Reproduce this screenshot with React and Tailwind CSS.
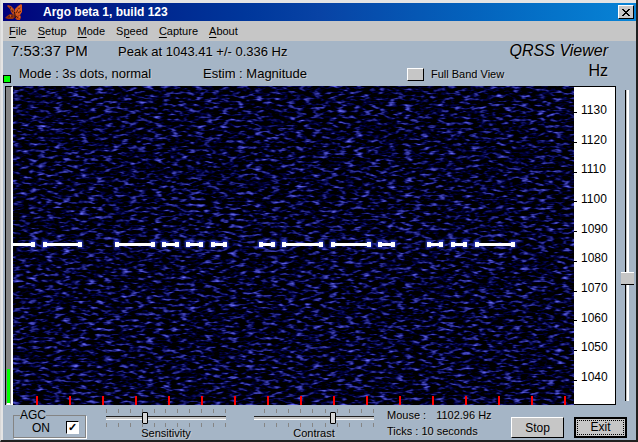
import { useState } from "react";

const MENUS = [
  { before: "", key: "F", after: "ile" },
  { before: "", key: "S", after: "etup" },
  { before: "", key: "M", after: "ode" },
  { before: "S", key: "p", after: "eed" },
  { before: "", key: "C", after: "apture" },
  { before: "", key: "A", after: "bout" },
];

const FREQUENCIES = [1130, 1120, 1110, 1100, 1090, 1080, 1070, 1060, 1050, 1040];

// start and end of every keyed element on the trace
const MORSE = [
  [-4, 21],
  [32, 68],
  [104, 141],
  [151, 165],
  [175, 189],
  [200, 213],
  [248, 261],
  [271, 309],
  [320, 357],
  [367, 381],
  [416, 429],
  [440, 453],
  [464, 501],
];

const TIME_TICKS = Array.from({ length: 17 }, (_, i) => 23 + i * 33);

const Butterfly = () => (
  <svg width="18" height="18" viewBox="0 0 18 18" aria-hidden="true">
    <path d="M8 12 6 9 5 6 2 3 3 2 6 3 9 6 10 11Z" fill="#b8481c" />
    <path d="M9 12 10 6 13 3 16 1 17 2 17 9 15 12 11 14Z" fill="#d8581c" />
    <path d="M9 12 5 11 2 13 0 15 3 16 8 16 10 14Z" fill="#94300e" />
    <path d="M10 13 15 12 16 14 15 17 12 17 10 15Z" fill="#c04414" />
    <path d="M9 9 10 9 11 15 10 15Z" fill="#2a1008" />
    <path d="M5 4 8 9M15 4 11 10M3 14 8 13M13 15 11 13M16 8 13 10" stroke="#5a2008" fill="none" />
    <path d="M14 4h1M13 7h1M6 6h1M5 13h1M14 14h1" stroke="#f09050" fill="none" />
  </svg>
);

const Spectrogram = () => (
  <svg
    className="min-w-0 flex-1 bg-black"
    viewBox="0 0 561 319"
    preserveAspectRatio="none"
    shapeRendering="crispEdges"
    role="img"
    aria-label="Spectrogram"
  >
    <defs>
      <filter id="noise" x="0" y="0" width="100%" height="100%" colorInterpolationFilters="sRGB">
        <feTurbulence type="fractalNoise" baseFrequency="0.12 0.33" numOctaves="2" seed="7" />
        <feColorMatrix
          values="1.3 0 0 0 -0.73
                  1.3 0 0 0 -0.72
                  2.3 0 0 0 -1.03
                  0 0 0 0 1"
        />
      </filter>
      <filter id="glow" x="-5%" y="-200%" width="110%" height="500%">
        <feGaussianBlur stdDeviation="1" />
      </filter>
    </defs>
    <rect width="561" height="319" fill="#000018" />
    <rect width="561" height="319" filter="url(#noise)" />
    <g filter="url(#glow)" fill="#2838c8">
      {MORSE.map(([from, to]) => (
        <g key={from}>
          <rect x={from - 3} y="154" width="6" height="8" />
          <rect x={to - 4} y="154" width="6" height="8" />
        </g>
      ))}
    </g>
    {MORSE.map(([from, to]) => (
      <g key={from} fill="#fff">
        <rect x={from - 1} y="157" width={to - from} height="3" />
        <rect x={from - 2} y="156" width="4" height="5" rx="1" />
        <rect x={to - 3} y="156" width="4" height="5" rx="1" />
      </g>
    ))}
    {TIME_TICKS.map((x) => (
      <rect key={x} x={x} y="310" width="2" height="9" fill="#f00" />
    ))}
  </svg>
);

const TickRow = ({ count }) => (
  <div className="flex justify-between" aria-hidden="true">
    {Array.from({ length: count }, (_, i) => (
      <span key={i} className="h-1 w-px bg-[#858585]" />
    ))}
  </div>
);

const Slider = ({ id, label, value, onChange, tickCount, tickClass }) => (
  <div className="flex w-[120px] flex-col">
    <div className={tickClass}>
      <TickRow count={tickCount} />
    </div>
    <input
      id={id}
      type="range"
      min="0"
      max="100"
      value={value}
      onChange={(e) => onChange(Number(e.target.value))}
      className="-my-px block h-[12px] w-full appearance-none bg-transparent [&::-webkit-slider-runnable-track]:h-1 [&::-webkit-slider-runnable-track]:border-t [&::-webkit-slider-runnable-track]:border-b [&::-webkit-slider-runnable-track]:border-t-[#202020] [&::-webkit-slider-runnable-track]:border-b-white [&::-webkit-slider-runnable-track]:bg-[#c6c6c6] [&::-webkit-slider-thumb]:-mt-[5px] [&::-webkit-slider-thumb]:h-3 [&::-webkit-slider-thumb]:w-1.5 [&::-webkit-slider-thumb]:appearance-none [&::-webkit-slider-thumb]:rounded-[1px] [&::-webkit-slider-thumb]:border [&::-webkit-slider-thumb]:border-black [&::-webkit-slider-thumb]:bg-[#d6d6d6]"
    />
    <div className={tickClass}>
      <TickRow count={tickCount} />
    </div>
    <label htmlFor={id} className="text-center text-[11px] leading-3">
      {label}
    </label>
  </div>
);

const App = () => {
  const [agc, setAgc] = useState(true);
  const [sensitivity, setSensitivity] = useState(32);
  const [contrast, setContrast] = useState(67);
  const [offset, setOffset] = useState(39);

  return (
    <div className="flex min-h-screen flex-col border-r-2 border-b-2 border-l border-r-[#202020] border-b-[#202020] border-l-[#d8d8d8] bg-[#a5b5c6] font-['Liberation_Sans',Arial,sans-serif] text-black">
      <div className="flex flex-1 flex-col border-t-[3px] border-l-2 border-[#e4e4e4]">
        <header className="flex h-[18px] items-center bg-linear-to-r from-[#00007b] via-[#0843a5] to-[#0884d6] pr-0.5 pl-0.5">
          <Butterfly />
          <h1 className="ml-5 flex-1 text-xs font-bold text-white">Argo beta 1, build 123</h1>
          <button
            aria-label="Close"
            className="flex h-[14px] w-4 items-center justify-center border border-t-white border-r-black border-b-black border-l-white bg-[#c6c6c6]"
          >
            <svg width="8" height="7" viewBox="0 0 8 7" shapeRendering="crispEdges">
              <path d="M0 0h2v1h1v1h2v-1h1v-1h2v1h-1v1h-1v1h-1v1h1v1h1v1h1v1h-2v-1h-1v-1h-2v1h-1v1h-2v-1h1v-1h1v-1h1v-1h-1v-1h-1v-1h-1z" />
            </svg>
          </button>
        </header>

        <nav className="flex h-5 items-center gap-[11px] bg-[#c6c6c6] px-1.5 text-[11px]">
          {MENUS.map((menu) => (
            <button key={menu.key}>
              {menu.before}
              <span className="underline underline-offset-2">{menu.key}</span>
              {menu.after}
            </button>
          ))}
        </nav>

        <section className="flex text-[13px] [text-shadow:1px_1px_0_#c6c6c6]">
          <div className="flex-1">
            <div className="flex h-[21px] items-center">
              <time className="w-[115px] pl-2 text-[15px]">7:53:37 PM</time>
              <p>Peak at 1043.41 +/- 0.336 Hz</p>
            </div>
            <div className="flex h-6 items-center">
              <span className="mt-2.5 h-2 w-2 border border-black bg-[#00ff00]" />
              <p className="w-[192px] pl-2">Mode : 3s dots, normal</p>
              <p className="w-[204px]">Estim : Magnitude</p>
              <button
                id="band"
                aria-labelledby="band-label"
                className="h-[13px] w-[17px] border border-t-white border-r-black border-b-black border-l-white bg-[#c6c6c6]"
              />
              <label id="band-label" htmlFor="band" className="ml-[7px] text-[11px]">
                Full Band View
              </label>
            </div>
          </div>
          <div className="pr-7 text-right text-base leading-5">
            <p className="italic">QRSS Viewer</p>
            <p>Hz</p>
          </div>
        </section>

        <main className="flex min-h-[319px] flex-1">
          <div className="ml-0.5 flex w-2 flex-col justify-end border-t border-r-2 border-l border-t-black border-r-white border-l-black bg-[#848484]">
            <div className="h-9 border-r border-b-2 border-l border-x-[#848484] border-b-white bg-[#00ff00]" />
          </div>
          <Spectrogram />
          <div className="flex w-[42px] flex-col border border-l-0 border-black bg-white pt-2 pb-3 text-xs">
            {FREQUENCIES.map((frequency) => (
              <div key={frequency} className="flex flex-1 items-center gap-1">
                <span className="mt-1.5 h-px w-[3px] bg-black" />
                {frequency}
              </div>
            ))}
          </div>
          <div className="flex w-5 flex-col py-1 pl-1">
            <input
              type="range"
              aria-label="Base frequency"
              min="0"
              max="100"
              value={offset}
              onChange={(e) => setOffset(Number(e.target.value))}
              className="min-h-0 w-[13px] flex-1 appearance-none bg-transparent [direction:rtl] [writing-mode:vertical-lr] [&::-webkit-slider-runnable-track]:w-1 [&::-webkit-slider-runnable-track]:border-r-2 [&::-webkit-slider-runnable-track]:border-l [&::-webkit-slider-runnable-track]:border-r-white [&::-webkit-slider-runnable-track]:border-l-black [&::-webkit-slider-runnable-track]:bg-[#c6c6c6] [&::-webkit-slider-thumb]:-ml-[5px] [&::-webkit-slider-thumb]:h-[13px] [&::-webkit-slider-thumb]:w-[13px] [&::-webkit-slider-thumb]:appearance-none [&::-webkit-slider-thumb]:border-t [&::-webkit-slider-thumb]:border-b [&::-webkit-slider-thumb]:border-t-white [&::-webkit-slider-thumb]:border-b-black [&::-webkit-slider-thumb]:bg-[#c6c6c6]"
            />
          </div>
        </main>

        <footer className="flex h-[35px] items-start pt-1 pr-[9px] pl-2.5 text-[11px]">
          <fieldset className="h-[29px] w-[73px] border border-[#848484] px-1.5 shadow-[1px_1px_0_#fff]">
            <legend className="text-xs leading-3">AGC</legend>
            <label className="flex items-center justify-end gap-4 text-xs leading-3">
              ON
              <input
                type="checkbox"
                checked={agc}
                onChange={(e) => setAgc(e.target.checked)}
                className="h-[13px] w-[13px] appearance-none border border-t-black border-r-white border-b-white border-l-black bg-white checked:after:block checked:after:text-center checked:after:text-[11px] checked:after:leading-[11px] checked:after:font-bold checked:after:content-['✓']"
              />
            </label>
          </fieldset>
          <div className="ml-5 flex gap-7 [text-shadow:1px_1px_0_#c6c6c6]">
            <Slider
              id="sensitivity"
              label="Sensitivity"
              value={sensitivity}
              onChange={setSensitivity}
              tickCount={11}
              tickClass=""
            />
            <Slider
              id="contrast"
              label="Contrast"
              value={contrast}
              onChange={setContrast}
              tickCount={10}
              tickClass="pl-2.5"
            />
          </div>
          <div className="-mt-0.5 ml-[13px] flex-1 whitespace-nowrap leading-4 [text-shadow:1px_1px_0_#c6c6c6]">
            <p className="flex gap-2.5">
              <span>Mouse :</span>
              <span>1102.96 Hz</span>
            </p>
            <p>Ticks : 10 seconds</p>
          </div>
          <button className="mt-2 h-[21px] w-[53px] border border-t-white border-r-black border-b-black border-l-white bg-[#c6c6c6] text-xs">
            Stop
          </button>
          <button className="mt-2 ml-2.5 h-[21px] w-[53px] border-2 border-black bg-[#c6c6c6] p-px text-xs">
            <span className="block border border-dotted border-black leading-[13px]">Exit</span>
          </button>
        </footer>
      </div>
    </div>
  );
};

export default App;
